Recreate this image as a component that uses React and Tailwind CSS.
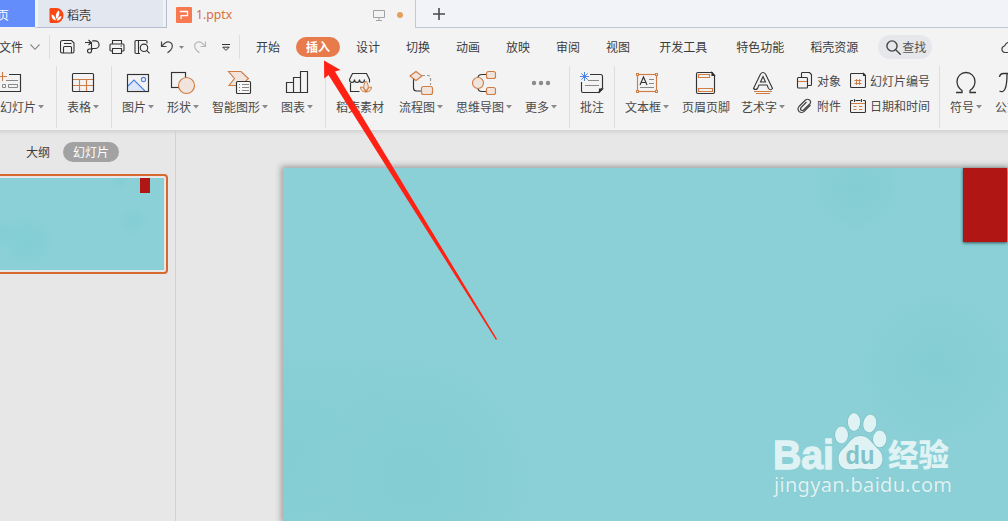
import React from "react";

const INK = "#333333";
const OR = "#cf7d45";
const FILL = "#f1e4dc";

function Caret() {
  return <svg className="ml-[2px] shrink-0" width="6" height="4" viewBox="0 0 6 4"><path d="M0 0h6L3 3.6z" fill="#8a8a8a" /></svg>;
}

function Sep({ className = "" }) {
  return <div className={"w-px shrink-0 bg-[#dedede] " + className} />;
}

// The viewBox starts at the icon's own page position.
function Glyph({ x, children }) {
  return (
    <svg width="32" height="28" viewBox={`${x} 69 32 28`} fill="none" stroke={INK} strokeWidth="1.15" className="shrink-0 overflow-visible">
      {children}
    </svg>
  );
}

function Tool({ label, caret = true, className = "", x, children }) {
  return (
    <div className={"flex shrink-0 flex-col items-center pt-[3px] " + className}>
      <Glyph x={x}>{children}</Glyph>
      <div className="flex h-5 items-center whitespace-nowrap">
        <span>{label}</span>
        {caret && <Caret />}
      </div>
    </div>
  );
}

function TabBar() {
  return (
    <div className="flex h-7 shrink-0 bg-[#f3f3f3] text-[12px]">
      <div className="flex h-[27px] w-[35px] shrink-0 items-center overflow-hidden bg-[#638dfb] text-white">
        <span className="-ml-[3px] pt-0.5">页</span>
      </div>
      <div className="w-[3px] border-b border-[#c2c8d5]" />
      <div className="flex w-[125px] shrink-0 items-center border-b border-[#b5bccd] bg-[#e3e7f0] pl-[11px] pt-[3px]">
        <svg width="15" height="15" viewBox="0 0 15 15">
          <path d="M2 0h5.5a7 7.5 0 0 1 0 15H2a1.5 1.5 0 0 1-1.5-1.5V2A1.5 1.5 0 0 1 2 0z" fill="#fa4713" />
          <path d="M6.8 12.5C3.6 12 2.3 9.7 2.6 6.6c2.6.8 4.1 2.9 4.2 5.9zM7.4 11C6 7.5 7.2 4.2 10 2.6c1.1 3.2.1 6.3-2.6 8.4zM7.7 12.7c.5-2.5 2.2-4.1 4.7-4.6.1 2.8-1.8 4.5-4.7 4.6z" fill="#fff" />
        </svg>
        <span className="ml-[3px]">稻壳</span>
      </div>
      <div className="w-1 shrink-0 border-b border-r border-[#b5bccd] bg-[#eef1f8]" />
      <div className="flex w-[248px] shrink-0 items-center pl-[9px] pt-0.5">
        <svg width="16" height="16" viewBox="0 0 16 16">
          <rect width="16" height="16" rx="1" fill="#f87850" />
          <path d="M3.8 4.5h7.7v4.2H5.1v3.4" fill="none" stroke="#fff" strokeWidth="1.3" />
        </svg>
        <span className="ml-1 font-['Noto_Sans','Noto_Sans_CJK_SC',sans-serif] text-[12.2px] text-[#d8703a]">1.pptx</span>
        <svg className="ml-auto" width="12" height="12" viewBox="0 0 12 12" fill="none" stroke="#a3a3a3">
          <path d="M.5 1.500h11v7H.5zM6 8.500V11.500M3 11.500h6" />
        </svg>
        <div className="ml-3 mr-3 size-[6px] rounded-full bg-[#e5a05d]" />
      </div>
      <div className="flex flex-1 items-center border-b border-l border-[#c0c7d5] bg-[#f2f3f8] pl-[17px] pt-px">
        <svg width="12" height="12" viewBox="0 0 12 12" stroke="#4a4a4a" strokeWidth="1.6"><path d="M0 6h12M6 0v12" /></svg>
      </div>
    </div>
  );
}

function QuickAccess() {
  return (
    <>
      <svg className="ml-[10px] shrink-0" width="15" height="16" viewBox="0 0 15 16" fill="none" stroke={INK} strokeWidth="1.1">
        <path d="M2.500 1.500H11.500L14 4v8.500q0 1.500-1.500 1.500h-10Q.500 14 .500 12.500V3.500q0-2 2-2zM4 4.500h7.500M3.500 14V8.500q0-1 1-1h6q1 0 1 1V14" />
      </svg>
      <svg className="ml-[9px] shrink-0" width="17" height="16" viewBox="0 0 17 16" fill="none" stroke={INK} strokeWidth="1.15">
        <path d="M1 3.500h6M4.500 1l2.700 2.500L4.500 6M8.200 1.800h3a3.800 3.800 0 0 1 0 7.700H7.500M7.500 3v9a2 2 0 1 1-2.200-2H9" />
      </svg>
      <svg className="ml-[8px] shrink-0" width="16" height="16" viewBox="0 0 16 16" fill="none" stroke={INK} strokeWidth="1.1">
        <path d="M3.500 5V1.500h9V5M3.500 12H2a1 1 0 0 1-1-1V6a1 1 0 0 1 1-1h12a1 1 0 0 1 1 1v5a1 1 0 0 1-1 1h-1.500M3.500 9.500h9v5h-9zM11.500 7h1.500" />
      </svg>
      <svg className="ml-[9px] shrink-0" width="17" height="16" viewBox="0 0 17 16" fill="none" stroke={INK} strokeWidth="1.1">
        <path d="M6 14.500H2a1 1 0 0 1-1-1v-11a1 1 0 0 1 1-1h10a1 1 0 0 1 1 1v2M4.500 1.500V14M12.600 11.400l3 3" />
        <circle cx="10" cy="8.800" r="3.700" />
      </svg>
      <svg className="ml-[9px] shrink-0" width="15" height="16" viewBox="0 0 15 16" fill="none" stroke="#444" strokeWidth="1.2">
        <path d="M1.500 2.500v5h5M2 7.200C4.500 3.600 7.500 2.200 10 3.200c3 1.400 3 5.200.8 7.600-1 1.200-2 2-3.300 3" />
      </svg>
      <svg className="ml-[4px] shrink-0" width="5" height="3" viewBox="0 0 5 3"><path d="M0 0h5L2.500 3z" fill="#858585" /></svg>
      <svg className="ml-[9px] shrink-0" width="15" height="16" viewBox="0 0 15 16" fill="none" stroke="#b7b7b7" strokeWidth="1.2">
        <path d="M12.500 2.500v5h-5M12 7.200C9.500 3.600 6.500 2.200 4 3.200 1 4.600 1 8.400 3.200 10.800c1 1.200 2 2 3.300 3" />
      </svg>
      <svg className="ml-[14px] shrink-0" width="8" height="8" viewBox="0 0 8 8" fill="none" stroke={INK} strokeWidth="1">
        <path d="M0 1.500h8M.800 4.200h6.400L4 7.400z" />
      </svg>
    </>
  );
}

function MenuBar() {
  return (
    <div className="flex h-[38px] shrink-0 items-center overflow-hidden whitespace-nowrap bg-[#f3f3f3] text-[12px] leading-4">
      <span className="-ml-px">文件</span>
      <svg className="ml-[7px] shrink-0" width="10" height="6" viewBox="0 0 10 6" fill="none" stroke="#888" strokeWidth="1.1"><path d="M.5.5L5 5.300 9.500.5" /></svg>
      <Sep className="ml-[9px] h-6" />
      <QuickAccess />
      <Sep className="ml-[9px] h-6" />
      <span className="ml-4">开始</span>
      <span className="ml-4 flex h-5 w-11 shrink-0 items-center justify-center rounded-full bg-[#e87b4c] font-bold text-white">插入</span>
      <div className="ml-4 flex gap-[26px]">
        <span>设计</span><span>切换</span><span>动画</span><span>放映</span><span>审阅</span><span>视图</span>
      </div>
      <span className="ml-[29px]">开发工具</span>
      <span className="ml-[29px]">特色功能</span>
      <span className="ml-[26px]">稻壳资源</span>
      <div className="ml-5 flex h-6 w-[54px] shrink-0 items-center rounded-full bg-[#e5e7ea] pl-2">
        <svg width="15" height="15" viewBox="0 0 15 15" fill="none" stroke="#444" strokeWidth="1.4"><circle cx="6" cy="6" r="5.100" /><path d="M9.700 9.700l5 5" /></svg>
        <span className="ml-px text-[#555]">查找</span>
      </div>
      <svg className="ml-[69px] shrink-0" width="18" height="13" viewBox="0 0 18 13" fill="none" stroke="#444" strokeWidth="1.2"><path d="M5 11.500H4a3.300 3.300 0 0 1-.5-6.500C4.500 2.500 6.500 1 9 1c3 0 5 2 5 4.500 4 1 3 6 0 6z" /></svg>
    </div>
  );
}

function Ribbon() {
  return (
    <div className="flex h-[64px] shrink-0 overflow-hidden bg-[#f3f3f3] text-[12px] leading-4 text-[#4a4a4a]">
      <Tool label="幻灯片" className="w-11" x={6}>
        <path d="M9 74.500H20.500V91.500H0" />
        <path d="M-2 76.500H7M2.500 72V81" stroke={OR} />
        <path d="M6 80.500H18M8.500 84.500h9v3h-9zM2.500 84.500h3v3h-3z" stroke="#888" strokeWidth="1" />
      </Tool>
      <Sep className="ml-3 h-[62px]" />
      <Tool label="表格" className="ml-[10px] w-8" x={67}>
        <path d="M73 79.500h20M73 85.500h20M79.500 79v12M86.500 79v12" stroke={OR} />
        <rect x="72.500" y="73.500" width="21" height="18" rx="1" />
      </Tool>
      <Sep className="ml-3 h-[62px]" />
      <Tool label="图片" className="ml-[10px] w-8" x={122}>
        <path d="M128 90v-4l6-6 11 11z" fill="#dce7f7" stroke="none" />
        <path d="M128 86l6-6 11 11" stroke="#4e83e7" />
        <rect x="127.500" y="74.500" width="21" height="17" />
        <circle cx="143.500" cy="79.500" r="2.100" stroke="#4e83e7" />
      </Tool>
      <Tool label="形状" className="ml-[13px] w-8" x={167}>
        <rect x="171.500" y="72.500" width="14" height="15" />
        <circle cx="186.500" cy="85.500" r="8" fill={FILL} stroke={OR} />
      </Tool>
      <Tool label="智能图形" className="ml-[13px] w-14" x={224}>
        <path d="M228.500 71.500H241l7.500 7-7.500 7h-12l5.500-7z" fill={FILL} stroke={OR} />
        <rect x="236.500" y="81.500" width="14" height="12" rx="1" fill="#f8f8f8" />
        <path d="M239 84.500h1M242 84.500h7M239 87.500h1M242 87.500h7M239 90.500h1M242 90.500h7" stroke="#888" strokeWidth="1" />
      </Tool>
      <Tool label="图表" className="ml-[13px] w-8" x={281}>
        <path d="M286.500 82.500h7v10h-7zM293.500 77.500h7v15h-7zM300.500 71.500h7v21h-7z" />
      </Tool>
      <Sep className="ml-3 h-[62px]" />
      <Tool label="稻壳素材" caret={false} className="ml-[10px] w-12" x={344}>
        <path d="M349.500 79.500l3-6h14l3 6v3M349.500 79.500c0 4 5 4 5 0 0 4 5 4 5 0 0 4 5 4 5 0M350.500 83v8.500h9" />
        <path d="M366 92c-3-3-3-7 0-11 3 4 3 8 0 11zM366 92c-3.500 0-5.500-2-5.500-5 3 0 5 2 5.500 5zM366 92c3.500 0 5.500-2 5.500-5-3 0-5 2-5.500 5z" fill={FILL} stroke={OR} strokeWidth="1" />
      </Tool>
      <Tool label="流程图" className="ml-[15px] w-11" x={405}>
        <path d="M413.500 79v9a3 3 0 0 0 3 3h5" />
        <path d="M422 75.500h6q2.500 0 2.500 2.500v7" stroke="#999" strokeDasharray="3 2" />
        <path d="M410 76l6-4.500 6 4.500-6 4.500z" fill={FILL} stroke={OR} />
        <rect x="421.500" y="86.500" width="11" height="8" rx="2" fill={FILL} stroke={OR} />
      </Tool>
      <Tool label="思维导图" className="ml-[13px] w-14" x={468}>
        <path d="M478 78q0-3.500 4-3.500h5M478 88q0 3.500 4 3.500h5" />
        <circle cx="478" cy="83" r="5.500" fill={FILL} stroke={OR} />
        <rect x="486.500" y="71.500" width="9" height="7" rx="2" fill={FILL} stroke={OR} />
        <rect x="486.500" y="87.500" width="9" height="7" rx="2" fill={FILL} stroke={OR} />
      </Tool>
      <Tool label="更多" className="ml-[13px] w-8" x={525}>
        <g fill="#8b8b8b" stroke="none"><circle cx="534" cy="83" r="2.200" /><circle cx="541" cy="83" r="2.200" /><circle cx="548" cy="83" r="2.200" /></g>
      </Tool>
      <Sep className="ml-3 h-[62px]" />
      <Tool label="批注" caret={false} className="ml-[10px] w-6" x={576}>
        <path d="M590 74.500h10.500q2 0 2 2V88l-4 4.500H583q-1.500 0-1.500-1.500V82" />
        <path d="M599.500 92v-3h3z" fill={INK} />
        <path d="M588 80.500h11M585 85.500h14" stroke="#888" strokeWidth="1" />
        <path d="M584.500 72v9M580 76.500h9M581.300 73.300l6.400 6.400M587.700 73.300l-6.400 6.400" stroke="#4e83e7" strokeWidth="1" />
      </Tool>
      <Sep className="ml-[10px] h-[62px]" />
      <Tool label="文本框" className="ml-[10px] w-11" x={631}>
        <rect x="637.500" y="74.500" width="19" height="17" stroke={OR} />
        <g fill="#f3f3f3" stroke={OR} strokeWidth="1"><rect x="636.500" y="73.500" width="2" height="2" /><rect x="655.500" y="73.500" width="2" height="2" /><rect x="636.500" y="90.500" width="2" height="2" /><rect x="655.500" y="90.500" width="2" height="2" /></g>
        <path d="M640 85l3.500-8 3.500 8M641.200 82.500h4.600" />
        <path d="M649 79.500h5M649 83.500h5M640 87.500h14" stroke="#888" strokeWidth="1" />
      </Tool>
      <Tool label="页眉页脚" caret={false} className="ml-[13px] w-12" x={690}>
        <path d="M698 72.500h14l2.500 3V92q0 1.500-1.500 1.500h-15q-1.500 0-1.500-1.500V74q0-1.500 1.500-1.500z" />
        <path d="M712 72.500v3h2.500z" fill={INK} />
        <path d="M698.500 74.500h11v3h-11zM698.500 88.500h14v3h-14z" stroke={OR} />
      </Tool>
      <Tool label="艺术字" className="ml-[11px] w-11" x={747}>
        <path d="M753.500 88.500l7-14.500q2.500-3 5 0l7 14.500q-2 2.500-4 0l-1.500-3.500h-8l-1.500 3.500q-2 2-4 0zM760.500 82l2.500-5.500 2.500 5.500z" strokeWidth="1.100" />
        <path d="M754 91.500h18M756 93.500h14" stroke={OR} strokeWidth="1" />
      </Tool>
      <div className="ml-[11px] flex w-[45px] shrink-0 flex-col gap-[9px] pt-[6px]">
        <div className="flex items-center gap-1">
          <svg width="17" height="17" viewBox="0 0 17 17" fill="none" stroke={INK} strokeWidth="1.100">
            <path d="M5.500 5.500V1.500q0-1 1-1h7l2 2V12.500q0 1-1 1h-3" />
            <rect x="1.500" y="5.500" width="10" height="10.500" rx="1" /><path d="M2 9.500h9" stroke={OR} />
          </svg>
          <span className="whitespace-nowrap">对象</span>
        </div>
        <div className="flex items-center gap-1">
          <svg width="17" height="16" viewBox="0 0 17 16" fill="none" stroke="#444" strokeWidth="1.200">
            <path d="M14.500 7L8 13.500q-2.500 2-5 0-2-2.500 0-5L9.500 2q2-1.500 4 0t.5 3.700L7.500 12q-1.500 1-2.500 0t0-2.400L10.500 4" />
          </svg>
          <span className="whitespace-nowrap">附件</span>
        </div>
      </div>
      <div className="ml-[9px] flex w-[80px] shrink-0 flex-col gap-[9px] pt-[6px]">
        <div className="flex items-center gap-1">
          <svg width="16" height="17" viewBox="0 0 16 17" fill="none" stroke={INK} strokeWidth="1.100">
            <path d="M1.500 1.500h12l2 2V14.500q0 1-1 1h-13q-1 0-1-1v-12q0-1 1-1z" /><path d="M13.500 1.500v2h2z" fill={INK} />
            <path d="M6.500 7v6M9.500 7v6M4.500 8.500h7M4.500 11.500h7" stroke={OR} strokeWidth="1" />
          </svg>
          <span className="whitespace-nowrap">幻灯片编号</span>
        </div>
        <div className="flex items-center gap-1">
          <svg width="16" height="16" viewBox="0 0 16 16" fill="none" stroke={INK} strokeWidth="1.100">
            <path d="M3 2.500H1.500q-1 0-1 1V13.500q0 1 1 1h13q1 0 1-1V3.500q0-1-1-1H13M5.500 2.500h5M4.500 1v3M11.500 1v3" />
            <path d="M1 5.500h14M3.500 8.500h3M9 8.500h3.500M3.500 11.500h3M9 11.500h3.500" stroke={OR} />
          </svg>
          <span className="whitespace-nowrap">日期和时间</span>
        </div>
      </div>
      <Sep className="ml-[9px] h-[62px]" />
      <Tool label="符号" className="ml-[10px] w-8" x={950}>
        <path d="M956 92.500h6v-2c-3-2-5-5-5-9 0-5 4-9 9-9s9 4 9 9c0 4-2 7-5 9v2h6" strokeWidth="1.300" />
      </Tool>
      <Tool label="公式" caret={false} className="ml-[13px] w-6" x={991}>
        <path d="M999.500 77q.5-3.500 4-3.500h16M1007 74q0 11-2 15t-5.500 2" strokeWidth="1.300" />
      </Tool>
    </div>
  );
}

function Workspace() {
  return (
    <div className="flex min-h-0 flex-1 bg-[#e7e7e7] bg-[linear-gradient(#d3d3d3,#e7e7e7_5px)]">
      <aside className="w-44 shrink-0 border-r border-[#d2d2d2] pt-3 text-[12px]">
        <div className="flex h-5 items-center">
          <span className="ml-[26px] -mt-px">大纲</span>
          <span className="ml-[13px] flex h-5 w-14 items-center justify-center rounded-full bg-[#a2a2a2] pb-px text-white">幻灯片</span>
        </div>
        <div className="mt-3 h-[100px] w-[168px] rounded-r-[4px] border-y-2 border-r-2 border-[#d66930] py-[2px] pr-[2px]">
          <div className="flex h-full justify-end bg-[#8bd0d6] bg-[radial-gradient(circle_at_27px_63px,#83cdd4_0,#85ced5_12px,transparent_28px),radial-gradient(circle_at_5px_55px,#83cdd4_0,transparent_16px),radial-gradient(circle_at_119px_3px,#84cdd4_0,transparent_10px),radial-gradient(circle_at_134px_43px,#84cdd4_0,transparent_17px)] pr-[14px]">
            <div className="h-[15px] w-[10px] bg-[#b01613]" />
          </div>
        </div>
      </aside>
      <main className="min-w-0 flex-1 overflow-hidden pl-[107px] pt-[38px]">
        <div className="relative h-full bg-[#8bd0d6] bg-[radial-gradient(circle_at_127px_310px,#83cdd3_0,#86ced4_70px,transparent_145px),radial-gradient(circle_at_20px_290px,#82cdd3_0,transparent_130px),radial-gradient(circle_at_574px_19px,#83cdd3_0,transparent_55px),radial-gradient(circle_at_653px_200px,#84cdd3_0,#88cfd5_60px,transparent_90px)] shadow-[0_0_6px_2px_#a0a0a0]">
          <div className="ml-auto mr-px h-[74px] w-[44px] bg-[#b01613] shadow-[0_1px_3px_#31565a]" />
          <Watermark />
        </div>
      </main>
    </div>
  );
}

function Watermark() {
  return (
    <svg className="absolute bottom-5 left-[487px]" width="190" height="94" viewBox="770 407 190 94">
      <g fill="#dff2f4" stroke="#7bbcc2" strokeWidth="1.200" paintOrder="stroke">
        <text x="773" y="468.500" fontSize="41" fontWeight="700" textLength="61" lengthAdjust="spacingAndGlyphs" stroke="#dff2f4" strokeWidth="1.300" className="font-['Liberation_Sans',sans-serif]">Bai</text>
        <ellipse cx="841.500" cy="435" rx="6.500" ry="8.500" />
        <ellipse cx="854" cy="422" rx="6.200" ry="9" />
        <ellipse cx="869.800" cy="423.500" rx="6.500" ry="9" transform="rotate(10 869.800 423.500)" />
        <ellipse cx="879.700" cy="439" rx="6.700" ry="8.500" />
        <path d="M860.500 436c7 0 10 5 14 9.500 4 4 8 7 8 13 0 8-5 11-12 11-4 0-6-1-10-1s-6 1-10 1c-7 0-12-3-12-11 0-6 4-9 8-13 4-4.500 7-9.500 14-9.500z" />
        <text x="888" y="466" fontSize="31" fontWeight="900" textLength="61" lengthAdjust="spacingAndGlyphs" stroke="none" className="font-['Noto_Sans_CJK_SC',sans-serif]">经验</text>
        <text x="774" y="492" fontSize="20" textLength="178" lengthAdjust="spacing" strokeWidth=".6" className="font-['Noto_Sans',sans-serif]">jingyan.baidu.com</text>
      </g>
      <text x="845.500" y="464" fontSize="26" fontWeight="700" fill="#82c3c9" textLength="29" lengthAdjust="spacingAndGlyphs" className="font-['Liberation_Sans',sans-serif]">du</text>
    </svg>
  );
}

export default function App() {
  return (
    <div className="relative flex h-[521px] w-[1008px] flex-col overflow-hidden font-['Noto_Sans_CJK_SC',sans-serif] text-[#3c3c3c]">
      <TabBar />
      <MenuBar />
      <Ribbon />
      <Workspace />
      <svg className="pointer-events-none absolute left-[320px] top-[57px]" width="182" height="288" viewBox="320 57 182 288">
        <path d="M324 60.500L340.500 70 335 71.500 497 339 496 340 328.500 75 324.200 78.500z" fill="#ff2214" />
      </svg>
    </div>
  );
}
